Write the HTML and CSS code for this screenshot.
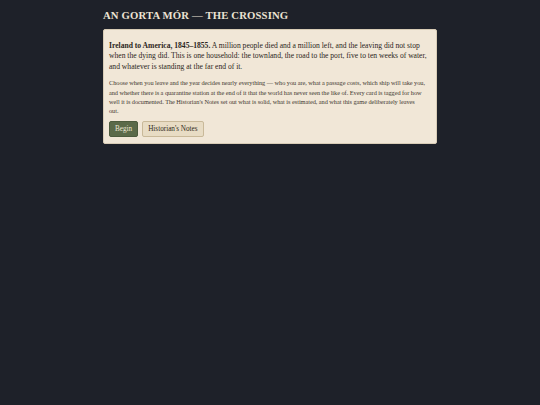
FILE: index.html
```html
<!DOCTYPE html>
<html>
<head>
<meta charset="utf-8">
<link rel="stylesheet" href="styles.css">
</head>
<body>
<main class="wrap">
  <h1 class="title">AN GORTA MÓR — THE CROSSING</h1>
  <section class="card">
    <p class="lead"><strong>Ireland to America, 1845–1855.</strong> A million people died and a million left, and the leaving did not stop when the dying did. This is one household: the townland, the road to the port, five to ten weeks of water, and whatever is standing at the far end of it.</p>
    <p class="small">Choose when you leave and the year decides nearly everything — who you are, what a passage costs, which ship will take you, and whether there is a quarantine station at the end of it that the world has never seen the like of. Every card is tagged for how well it is documented. The Historian's Notes set out what is solid, what is estimated, and what this game deliberately leaves out.</p>
    <div class="actions">
      <button class="btn primary">Begin</button>
      <button class="btn secondary">Historian's Notes</button>
    </div>
  </section>
</main>
</body>
</html>
```
FILE: styles.css
```css
html, body {
  margin: 0;
  padding: 0;
  background: #1e2129;
}
body {
  font-family: "Liberation Serif", "DejaVu Serif", serif;
  color: #2a2520;
}
.wrap {
  width: 334px;
  margin: 0 auto;
  padding-top: 9px;
}
.title {
  margin: 0 0 7px 0;
  font-size: 10.7px;
  font-weight: bold;
  color: #ece3d3;
  letter-spacing: 0.15px;
  line-height: 13px;
}
.card {
  background: #f1e7d7;
  border: 1px solid #d8ccb6;
  border-radius: 2px;
  padding: 11px 5px 6px 5px;
}
.lead {
  margin: 0 0 6px 0;
  font-size: 7.6px;
  line-height: 10.4px;
  color: #2b2520;
}
.small {
  margin: 0 0 6px 0;
  padding-right: 6px;
  font-size: 6.3px;
  letter-spacing: -0.04px;
  line-height: 9.3px;
  color: #3f3830;
}
.actions {
  display: flex;
  gap: 4px;
}
.btn {
  font-family: inherit;
  font-size: 7.2px;
  height: 16px;
  padding: 0 5px;
  border-radius: 2px;
  cursor: pointer;
}
.primary {
  background: #5b6a49;
  color: #efe6d4;
  border: 1px solid #4d5b3d;
}
.secondary {
  background: #e8dcc4;
  color: #2e2820;
  border: 1px solid #c9b999;
}
```
